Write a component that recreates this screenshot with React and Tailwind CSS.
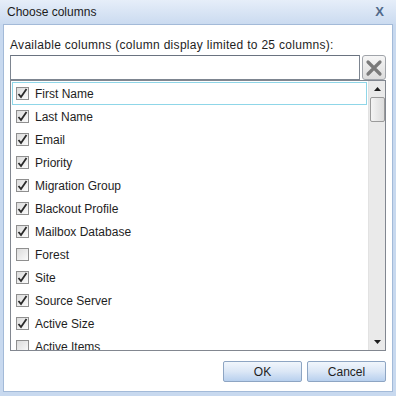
import React from 'react';

const columns = [
  { name: 'First Name', checked: true },
  { name: 'Last Name', checked: true },
  { name: 'Email', checked: true },
  { name: 'Priority', checked: true },
  { name: 'Migration Group', checked: true },
  { name: 'Blackout Profile', checked: true },
  { name: 'Mailbox Database', checked: true },
  { name: 'Forest', checked: false },
  { name: 'Site', checked: true },
  { name: 'Source Server', checked: true },
  { name: 'Active Size', checked: true },
  { name: 'Active Items', checked: false },
];

const CheckBox = ({ checked }) => (
  <div className="w-[13px] h-[13px] border border-[#8f8f8f] bg-gradient-to-br from-[#dcdcdc] to-[#fbfbfb] flex items-center justify-center flex-shrink-0">
    {checked && (
      <svg width="11" height="11" viewBox="0 0 11 11">
        <path d="M1.5 6 L4 9 L9.5 1" fill="none" stroke="#2a2a2a" strokeWidth="1.8" />
      </svg>
    )}
  </div>
);

const Row = ({ col, focused }) => (
  <div className={`h-[23px] flex items-center gap-[6px] mx-[1px] pl-[3px] border ${focused ? 'border-[#8fd6e8]' : 'border-transparent'}`}>
    <CheckBox checked={col.checked} />
    <span className="text-[12px] text-[#1e1e1e] whitespace-nowrap">{col.name}</span>
  </div>
);

const Btn = ({ children }) => (
  <button className="h-[21px] w-[79px] border border-[#8ea5c3] rounded-[2px] bg-gradient-to-b from-[#f1f6fc] via-[#dbe7f6] via-50% to-[#b8d0ee] text-[12px] text-[#1e1e1e]">
    {children}
  </button>
);

export default function App() {
  return (
    <div className="w-[396px] h-[396px] bg-[#c8d9ef] flex flex-col font-['Liberation_Sans',sans-serif] overflow-hidden">
      <div className="h-[24px] flex items-center justify-between pl-[7px] pr-[12px] bg-gradient-to-b from-[#e6eef9] to-[#cbdbf0]">
        <span className="text-[12px] text-[#1b1b1b]">Choose columns</span>
        <span className="text-[13px] font-bold text-[#51698a]">X</span>
      </div>
      <div className="flex-1 mx-[3px] mb-[4px] bg-white border border-[#a3bad8] flex flex-col px-[6px] pt-[13px]">
        <div className="text-[12px] text-[#1e1e1e] leading-[14px] mb-[3px] tracking-[0.3px] whitespace-nowrap">
          Available columns (column display limited to 25 columns):
        </div>
        <div className="flex gap-[2px]">
          <div className="flex-1 h-[25px] border border-[#7d8590] border-t-[#6a7380]"></div>
          <div className="w-[24px] h-[25px] border border-[#a0a4aa] rounded-[3px] bg-gradient-to-b from-[#f6f6f6] to-[#dcdcdc] flex items-center justify-center">
            <svg width="18" height="18" viewBox="0 0 18 18">
              <path d="M3 3 L15 15 M15 3 L3 15" stroke="#7a7a7a" strokeWidth="3.2" strokeLinecap="round" />
            </svg>
          </div>
        </div>
        <div className="h-[271px] border border-[#828790] flex overflow-hidden">
          <div className="flex-1 pt-[1px] overflow-hidden">
            {columns.map((c, i) => (
              <Row key={c.name} col={c} focused={i === 0} />
            ))}
          </div>
          <div className="w-[17px] bg-[#eaeaea] border-l border-[#e2e2e2] flex flex-col items-center">
            <div className="h-[16px] flex items-center justify-center">
              <svg width="7" height="4" viewBox="0 0 7 4"><path d="M0 4 L3.5 0 L7 4 Z" fill="#1e1e1e" /></svg>
            </div>
            <div className="w-[15px] h-[25px] rounded-[2px] border border-[#9a9a9a] bg-gradient-to-r from-[#f4f4f4] to-[#dcdcdc]"></div>
            <div className="flex-1"></div>
            <div className="h-[17px] flex items-center justify-center">
              <svg width="7" height="4" viewBox="0 0 7 4"><path d="M0 0 L7 0 L3.5 4 Z" fill="#1e1e1e" /></svg>
            </div>
          </div>
        </div>
        <div className="flex justify-end gap-[5px] mt-[10px]">
          <Btn>OK</Btn>
          <Btn>Cancel</Btn>
        </div>
      </div>
    </div>
  );
}
